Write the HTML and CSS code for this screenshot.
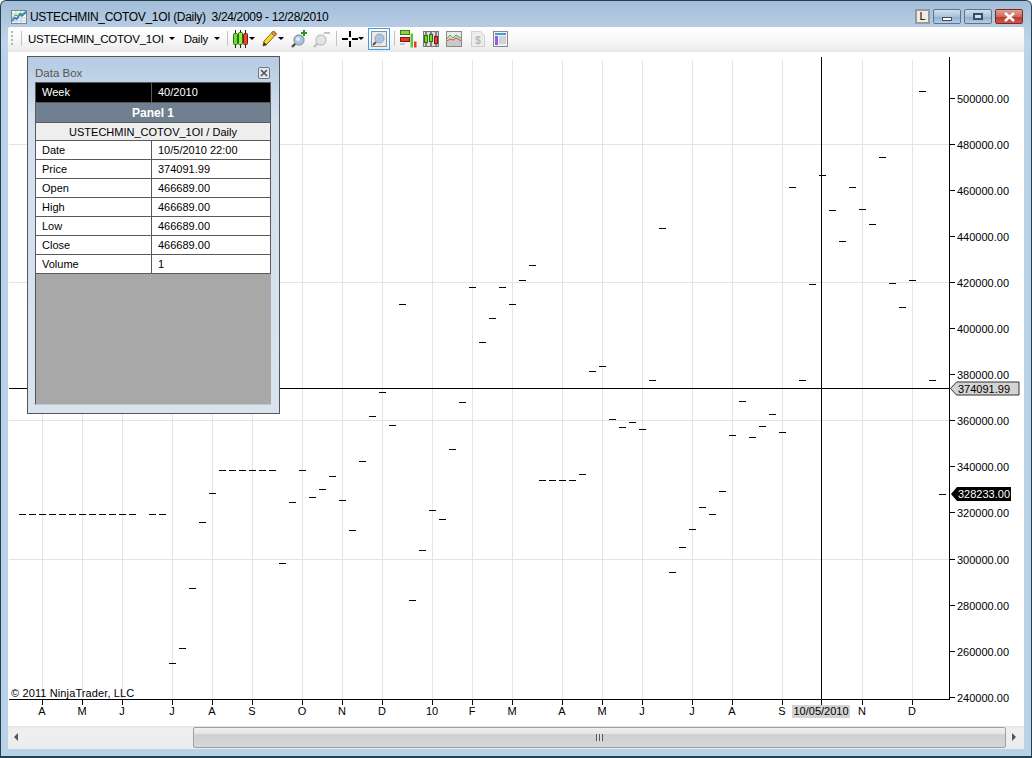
FILE: index.html
```html
<!DOCTYPE html>
<html lang="en">
<head>
  <meta charset="UTF-8">
  <title>USTECHMIN_COTOV_1OI (Daily)</title>
  <link rel="stylesheet" href="styles.css">
</head>
<body>

<div class="window">

  <!-- title bar -->
  <div class="titlebar">
    <svg class="app-icon" width="16" height="16" viewBox="0 0 16 16">
      <rect x="0.5" y="1.5" width="15" height="13" fill="#f4f6fa" stroke="#7b8794"/>
      <path d="M1 5h14M1 9h14M1 12h14M5 2v12M10 2v12" stroke="#c5ccd6"/>
      <path d="M1 12l3-3 2 1 3-5 2 2 4-4" fill="none" stroke="#2a70c8" stroke-width="1.5"/>
      <path d="M1 10l3-4 3 1 2-3 2 1 4-3" fill="none" stroke="#45b04a"/>
    </svg>
    <span class="title-text">USTECHMIN_COTOV_1OI (Daily)&nbsp; 3/24/2009 - 12/28/2010</span>
    <div class="caption-btns">
      <span class="link-btn">L</span>
      <span class="cap-btn"><i class="min-glyph"></i></span>
      <span class="cap-btn"><i class="max-glyph"></i></span>
      <span class="cap-btn cap-close">
        <svg width="13" height="10" viewBox="0 0 13 10"><path d="M2 1l9 8M11 1l-9 8" stroke="#fff" stroke-width="2.4"/></svg>
      </span>
    </div>
  </div>

  <!-- toolbar -->
  <div class="toolbar">
    <span class="grip"></span>
    <span class="sep"></span>
    <span class="tool-label">USTECHMIN_COTOV_1OI</span><span class="arrow arrow-a"></span>
    <span class="tool-label label-daily">Daily</span><span class="arrow arrow-daily"></span>
    <span class="sep sep-b"></span>

    <svg class="tool-icon gap-5" width="15" height="18" viewBox="0 0 15 18">
      <path d="M2.5 0v18M7.5 0v18M12.5 0v18" stroke="#222"/>
      <rect x="0.5" y="3.5" width="4" height="11" rx="1" fill="#6fe02a" stroke="#2d6a12"/>
      <rect x="5.5" y="2.5" width="4" height="12" rx="1" fill="#8cec3c" stroke="#2d6a12"/>
      <rect x="10.5" y="3.5" width="4" height="11" rx="1" fill="#ee4433" stroke="#7a1a12"/>
    </svg><span class="arrow arrow-i"></span>

    <svg class="tool-icon gap-7" width="15" height="17" viewBox="0 0 15 17">
      <path d="M11.5 1l3 3L5 14l-4 2 1-5z" fill="#f6d23c" stroke="#8a6d10"/>
      <path d="M11.5 1l3 3-2 2-3-3z" fill="#e8857a" stroke="#8a6d10"/>
      <path d="M1 16l1-4 3 3z" fill="#333"/>
    </svg><span class="arrow arrow-i"></span>

    <svg class="tool-icon gap-7" width="16" height="18" viewBox="0 0 16 18">
      <path d="M1 17l5-5" stroke="#444" stroke-width="2.2"/>
      <circle cx="8" cy="10" r="5" fill="#a5c6e8" stroke="#9a9fa6" stroke-width="1.4"/>
      <circle cx="7" cy="9" r="2" fill="#e6eef8"/>
      <path d="M13 0v6M10 3h6" stroke="#1a9a2a" stroke-width="2"/>
    </svg>
    <svg class="tool-icon gap-6" width="17" height="18" viewBox="0 0 17 18">
      <path d="M1 17l5-5" stroke="#bbb" stroke-width="2.2"/>
      <circle cx="8" cy="10" r="5" fill="#e4e4e4" stroke="#c6c6c6" stroke-width="1.4"/>
      <path d="M11 3h6" stroke="#c2c2c2" stroke-width="2"/>
    </svg>
    <span class="sep sep-c"></span>

    <svg class="tool-icon gap-5" width="16" height="16" viewBox="0 0 16 16">
      <path d="M0 8h6M10 8h6M8 0v6M8 10v6" stroke="#000" stroke-width="2"/>
    </svg><span class="arrow"></span>

    <span class="tool-selected">
      <svg width="16" height="16" viewBox="0 0 16 16">
        <rect x="0.5" y="0.5" width="15" height="15" fill="#e9e9e9" stroke="#8f8f8f"/>
        <path d="M2 14l3-3" stroke="#555" stroke-width="2"/>
        <circle cx="8.5" cy="7.5" r="4.5" fill="#a9c6e6" stroke="#9aa3ad"/>
      </svg>
    </span>
    <span class="sep sep-d"></span>

    <svg class="tool-icon gap-5" width="17" height="18" viewBox="0 0 17 18">
      <path d="M0 3h8M0 9h3M0 14h5" stroke="#999"/>
      <rect x="0.5" y="0.5" width="9" height="4" fill="#7ddc3a" stroke="#3c7a1a"/>
      <rect x="0.5" y="7.5" width="9" height="4" fill="#e8392c" stroke="#7a1a12"/>
      <rect x="10.5" y="3.5" width="2.5" height="14" fill="#58c832"/>
      <rect x="14" y="11.5" width="2.5" height="6" fill="#e8392c"/>
    </svg>
    <svg class="tool-icon gap-6" width="16" height="16" viewBox="0 0 16 16">
      <rect x="0.5" y="0.5" width="15" height="15" fill="#ddd" stroke="#777"/>
      <path d="M3 1v14M8 1v14M13 1v14" stroke="#222"/>
      <rect x="1.5" y="4.5" width="3" height="7" fill="#6fe02a" stroke="#2d6a12"/>
      <rect x="6.5" y="3.5" width="3" height="7" fill="#6fe02a" stroke="#2d6a12"/>
      <rect x="11.5" y="5.5" width="3" height="7" fill="#ee4433" stroke="#7a1a12"/>
    </svg>
    <svg class="tool-icon gap-7" width="16" height="16" viewBox="0 0 16 16">
      <rect x="0.5" y="0.5" width="15" height="15" fill="#e9e9e9" stroke="#8a8a8a"/>
      <path d="M1 11l3-5 3 2 3-4 5 4v7H1z" fill="#c9c9c9"/>
      <path d="M1 8l3-4 3 3 3-3 5 3" fill="none" stroke="#3fb04a"/>
      <path d="M1 10l3-2 3 1 3-2 5 3" fill="none" stroke="#e0554a"/>
    </svg>
    <svg class="tool-icon gap-9" width="14" height="16" viewBox="0 0 14 16">
      <path d="M0.5 0.5h9l4 4v11h-13z" fill="#ececec" stroke="#cfcfcf"/>
      <text class="doc-dollar" x="7" y="13">$</text>
    </svg>
    <svg class="tool-icon gap-8" width="15" height="16" viewBox="0 0 15 16">
      <rect x="0.5" y="0.5" width="14" height="15" fill="#f2f2f2" stroke="#888"/>
      <rect x="2" y="2" width="11" height="2" fill="#3e9cd6"/>
      <rect x="2" y="5" width="3" height="9" fill="#9a5ce0"/>
      <path d="M6 6h7M6 8h7M6 10h7M6 12h7" stroke="#a9b4c4"/>
    </svg>
  </div>

  <!-- chart -->
  <div class="chart">
    <svg class="plot" width="1016" height="675" viewBox="8 52 1016 675">
      <path class="grid" d="M42.5 60V699M82.5 60V699M122.5 60V699M172.5 60V699M212.5 60V699M252.5 60V699M302.5 60V699M342.5 60V699M382.5 60V699M432.5 60V699M472.5 60V699M512.5 60V699M562.5 60V699M602.5 60V699M642.5 60V699M692.5 60V699M732.5 60V699M782.5 60V699M862.5 60V699M912.5 60V699"/>
      <path class="grid" d="M9 144.5H949M9 282.5H949M9 420.5H949M9 559.5H949"/>

      <!-- one dash per bar -->
      <path class="bars" d="M19 514.5h7M29 514.5h7M39 514.5h7M49 514.5h7M59 514.5h7M69 514.5h7M79 514.5h7M89 514.5h7M99 514.5h7M109 514.5h7M119 514.5h7M129 514.5h7M149 514.5h7M159 514.5h7
        M169 663.5h7M179 648.5h7M189 588.5h7M199 522.5h7M209 493.5h7M219 470.5h7M229 470.5h7M239 470.5h7M249 470.5h7M259 470.5h7M269 470.5h7M279 563.5h7
        M289 502.5h7M299 470.5h7M309 497.5h7M319 489.5h7M329 476.5h7M339 500.5h7M349 530.5h7M359 461.5h7M369 416.5h7M379 392.5h7M389 425.5h7M399 304.5h7M409 600.5h7M419 550.5h7M429 510.5h7M439 519.5h7M449 449.5h7M459 402.5h7
        M469 287.5h7M479 342.5h7M489 318.5h7M499 287.5h7M509 304.5h7M519 280.5h7M529 265.5h7M539 480.5h7M549 480.5h7M559 480.5h7M569 480.5h7M579 474.5h7M589 371.5h7M599 366.5h7M609 419.5h7M619 427.5h7M629 422.5h7M639 429.5h7
        M649 380.5h7M659 228.5h7M669 572.5h7M679 547.5h7M689 529.5h7M699 507.5h7M709 514.5h7M719 491.5h7M729 435.5h7M739 401.5h7M749 437.5h7M759 426.5h7M769 414.5h7M779 432.5h7M789 187.5h7M799 380.5h7M809 284.5h7M819 175.5h7
        M829 210.5h7M839 241.5h7M849 187.5h7M859 209.5h7M869 224.5h7M879 157.5h7M889 283.5h7M899 307.5h7M909 280.5h7M919 91.5h7M929 380.5h7M939 494.5h7"/>

      <!-- crosshair and axes -->
      <path class="axis" d="M821.5 57V705M9 388.5H949"/>
      <path class="axis" d="M949.5 57V700M9 699.5H950"/>
      <path class="axis" d="M950 98.5h5M950 144.5h5M950 190.5h5M950 236.5h5M950 282.5h5M950 328.5h5M950 374.5h5M950 420.5h5M950 466.5h5M950 512.5h5M950 559.5h5M950 605.5h5M950 651.5h5M950 697.5h5"/>
      <path class="axis" d="M42.5 700v5M82.5 700v5M122.5 700v5M172.5 700v5M212.5 700v5M252.5 700v5M302.5 700v5M342.5 700v5M382.5 700v5M432.5 700v5M472.5 700v5M512.5 700v5M562.5 700v5M602.5 700v5M642.5 700v5M692.5 700v5M732.5 700v5M782.5 700v5M862.5 700v5M912.5 700v5"/>

      <text class="copyright" x="11" y="697">© 2011 NinjaTrader, LLC</text>

      <g class="price-labels">
        <text x="957" y="103">500000.00</text>
        <text x="957" y="149">480000.00</text>
        <text x="957" y="195">460000.00</text>
        <text x="957" y="241">440000.00</text>
        <text x="957" y="287">420000.00</text>
        <text x="957" y="333">400000.00</text>
        <text x="957" y="379">380000.00</text>
        <text x="957" y="425">360000.00</text>
        <text x="957" y="471">340000.00</text>
        <text x="957" y="517">320000.00</text>
        <text x="957" y="564">300000.00</text>
        <text x="957" y="610">280000.00</text>
        <text x="957" y="656">260000.00</text>
        <text x="957" y="702">240000.00</text>
      </g>

      <path class="tag-cross" d="M950.5 388.5l6-6.5h62.5v13h-62.5z"/>
      <text class="tag-text" x="958" y="393">374091.99</text>
      <path class="tag-last" d="M951 494l6-7h54v14h-54z"/>
      <text class="tag-text tag-text-light" x="958" y="498">328233.00</text>

      <g class="date-labels">
        <text x="42" y="715">A</text>
        <text x="82" y="715">M</text>
        <text x="122" y="715">J</text>
        <text x="172" y="715">J</text>
        <text x="212" y="715">A</text>
        <text x="252" y="715">S</text>
        <text x="302" y="715">O</text>
        <text x="342" y="715">N</text>
        <text x="382" y="715">D</text>
        <text x="432" y="715">10</text>
        <text x="472" y="715">F</text>
        <text x="512" y="715">M</text>
        <text x="562" y="715">A</text>
        <text x="602" y="715">M</text>
        <text x="642" y="715">J</text>
        <text x="692" y="715">J</text>
        <text x="732" y="715">A</text>
        <text x="782" y="715">S</text>
        <text x="862" y="715">N</text>
        <text x="912" y="715">D</text>
      </g>
      <rect class="date-tag" x="792" y="705" width="58" height="13"/>
      <text class="date-tag-text" x="821" y="715">10/05/2010</text>
    </svg>

    <!-- floating data box -->
    <div class="databox">
      <div class="databox-head">
        <span>Data Box</span>
        <span class="databox-close">
          <svg width="8" height="8" viewBox="0 0 8 8"><path d="M1 1l6 6M7 1l-6 6" stroke="#555" stroke-width="1.7"/></svg>
        </span>
      </div>
      <div class="databox-body">
        <table class="datagrid">
          <tr class="row-week"><td class="col-name">Week</td><td>40/2010</td></tr>
          <tr class="row-panel"><td colspan="2">Panel 1</td></tr>
          <tr class="row-series"><td colspan="2">USTECHMIN_COTOV_1OI / Daily</td></tr>
          <tr><td class="col-name">Date</td><td>10/5/2010 22:00</td></tr>
          <tr><td class="col-name">Price</td><td>374091.99</td></tr>
          <tr><td class="col-name">Open</td><td>466689.00</td></tr>
          <tr><td class="col-name">High</td><td>466689.00</td></tr>
          <tr><td class="col-name">Low</td><td>466689.00</td></tr>
          <tr><td class="col-name">Close</td><td>466689.00</td></tr>
          <tr><td class="col-name">Volume</td><td>1</td></tr>
        </table>
      </div>
    </div>
  </div>

  <!-- scrollbar -->
  <div class="scrollbar">
    <span class="scroll-arrow arrow-left"></span>
    <div class="scroll-thumb"><span class="thumb-grip"></span></div>
    <span class="scroll-arrow arrow-right"></span>
  </div>

</div>

</body>
</html>
```

FILE: styles.css
```css
html, body {
  margin: 0;
  padding: 0;
  background: #fff;
}

body {
  font-family: "Liberation Sans", Arial, sans-serif;
  font-size: 11px;
  color: #000;
}

.window {
  width: 1032px;
  height: 758px;
  box-sizing: border-box;
  padding: 0 7px 7px;
  display: flex;
  flex-direction: column;
  border: 1px solid #24414f;
  border-bottom-width: 2px;
  border-radius: 6px 6px 0 0;
  background: linear-gradient(to bottom, #a3bdd9 0, #c0d4e9 40px, #b9d2ea 60px);
}

/* --- title bar --- */
.titlebar {
  height: 26px;
  flex: none;
  display: flex;
  align-items: center;
  padding-top: 5px;
  box-sizing: border-box;
}

.app-icon {
  margin: 0 3px 0 3px;
}

.title-text {
  font-size: 12px;
  letter-spacing: -0.33px;
  white-space: pre;
}

.caption-btns {
  margin-left: auto;
  margin-right: 1px;
  display: flex;
  align-items: center;
  gap: 3px;
}

.link-btn {
  width: 11px;
  height: 11px;
  border: 2px solid #999;
  background: #f1ece0;
  font-size: 11px;
  line-height: 11px;
  text-align: center;
}

.cap-btn {
  width: 26px;
  height: 13px;
  border: 1px solid #5b7590;
  border-radius: 2px;
  background: linear-gradient(to bottom, #cfe0f0 0, #a9c3dd 50%, #8eadcc 51%, #b7cde3 100%);
  display: flex;
  align-items: center;
  justify-content: center;
}

.cap-close {
  border-color: #7a2a22;
  background: linear-gradient(to bottom, #e0a097 0, #cf6a5c 50%, #b8382a 51%, #cf5a4a 100%);
}

.min-glyph {
  display: block;
  width: 8px;
  height: 2px;
  border: 1px solid #3c4c5c;
  background: #fff;
  margin-top: 5px;
}

.max-glyph {
  display: block;
  width: 6px;
  height: 3px;
  border: 2px solid #3c4c5c;
  background: #cfe0f0;
}

/* --- toolbar --- */
.toolbar {
  height: 25px;
  flex: none;
  box-sizing: border-box;
  padding-bottom: 2px;
  display: flex;
  align-items: center;
  background: linear-gradient(to bottom, #fff 0, #f8f8f8 50%, #e9e9e9 100%);
  border-radius: 2px 2px 0 0;
}

.grip {
  width: 2px;
  height: 15px;
  margin-left: 3px;
  background: repeating-linear-gradient(to bottom, #b5b5b5 0, #b5b5b5 2px, transparent 2px, transparent 4px);
}

.sep {
  width: 1px;
  height: 15px;
  background: #c2c2c2;
  margin-left: 8px;
}

.tool-label {
  margin-left: 6px;
  font-size: 11.5px;
  letter-spacing: -0.25px;
}

.label-daily {
  margin-left: 9px;
}

.arrow {
  width: 0;
  height: 0;
  flex: none;
  border-style: solid;
  border-width: 3px 3px 0;
  border-color: #000 transparent transparent;
}

.arrow-a {
  margin-left: 5px;
}

.arrow-daily {
  margin-left: 6px;
}

.arrow-i {
  margin-left: 1px;
}

.sep-b {
  margin-left: 7px;
}

.sep-c {
  margin-left: 6px;
}

.sep-d {
  margin-left: 4px;
}

.tool-icon {
  flex: none;
}

.gap-5 {
  margin-left: 5px;
}

.gap-6 {
  margin-left: 6px;
}

.gap-7 {
  margin-left: 7px;
}

.gap-8 {
  margin-left: 8px;
}

.gap-9 {
  margin-left: 9px;
}

.doc-dollar {
  font-size: 10px;
  font-weight: bold;
  fill: #b5b5b5;
  text-anchor: middle;
}

.tool-selected {
  width: 20px;
  height: 20px;
  margin-left: 4px;
  border: 1px solid #3f9bef;
  display: flex;
  align-items: center;
  justify-content: center;
  flex: none;
}

/* --- chart --- */
.chart {
  flex: 1;
  position: relative;
  background: #fff;
  min-height: 0;
}

.plot {
  display: block;
}

.plot text {
  font-family: "Liberation Sans", Arial, sans-serif;
  font-size: 11px;
  fill: #000;
}

.plot .copyright {
  letter-spacing: 0.12px;
}

.grid {
  stroke: #e4e4e4;
  fill: none;
}

.bars,
.axis {
  stroke: #000;
  fill: none;
}

.date-labels text,
.date-tag-text {
  text-anchor: middle;
}

.tag-cross {
  fill: #d3d3d3;
  stroke: #333;
}

.tag-last {
  fill: #000;
}

.plot .tag-text-light {
  fill: #fff;
}

.date-tag {
  fill: #d3d3d3;
}

/* --- data box --- */
.databox {
  position: absolute;
  left: 19px;
  top: 4px;
  width: 253px;
  height: 358px;
  box-sizing: border-box;
  border: 1px solid #555;
  padding: 0 8px 8px 7px;
  display: flex;
  flex-direction: column;
  background: linear-gradient(to bottom, #b5cbe2 0, #d3e0ee 60px, #d8e3f0 100%);
}

.databox-head {
  height: 25px;
  flex: none;
  display: flex;
  align-items: center;
  justify-content: space-between;
  font-size: 11.5px;
  color: #555;
  padding: 7px 1px 0 0;
  box-sizing: border-box;
}

.databox-close {
  width: 10px;
  height: 10px;
  border: 1px solid #6b7787;
  border-radius: 2px;
  background: #e3e9f1;
  display: flex;
  align-items: center;
  justify-content: center;
}

.databox-body {
  flex: 1;
  background: #a8a8a8;
  border-left: 1px solid #555;
  border-bottom: 1px solid #c8c8c8;
}

.datagrid {
  width: 236px;
  border-collapse: collapse;
  table-layout: fixed;
  margin-left: -1px;
}

.datagrid td {
  height: 19px;
  box-sizing: border-box;
  padding: 0 0 0 6px;
  border: 1px solid #5a5a5a;
  background: #fff;
  line-height: 16px;
  white-space: nowrap;
}

.datagrid .col-name {
  width: 116px;
}

.datagrid .row-week td {
  height: 20px;
  padding-bottom: 1px;
  background: #000;
  color: #fff;
}

.datagrid .row-panel td {
  height: 20px;
  background: #708090;
  color: #fff;
  font-weight: bold;
  font-size: 12px;
  text-align: center;
  padding: 0;
}

.datagrid .row-series td {
  height: 18px;
  background: #eee;
  text-align: center;
  padding: 0;
}

/* --- scrollbar --- */
.scrollbar {
  height: 23px;
  flex: none;
  display: flex;
  align-items: center;
  background: linear-gradient(to bottom, #e4e4e4 0, #efefef 3px, #ececec 100%);
  box-sizing: border-box;
  padding-bottom: 1px;
}

.scroll-arrow {
  width: 0;
  height: 0;
  border-style: solid;
  border-color: transparent;
}

.arrow-left {
  margin-left: 6px;
  border-width: 4px 4px 4px 0;
  border-right-color: #555;
}

.arrow-right {
  margin-left: 6px;
  border-width: 4px 0 4px 4px;
  border-left-color: #555;
}

.scroll-thumb {
  width: 813px;
  height: 21px;
  margin-left: 175px;
  box-sizing: border-box;
  border: 1px solid #a0a0a0;
  border-radius: 2px;
  background: linear-gradient(to bottom, #f0f0f0 0, #e4e4e4 30%, #cfcfcf 35%, #d6d6d6 100%);
  display: flex;
  align-items: center;
  justify-content: center;
}

.thumb-grip {
  width: 7px;
  height: 7px;
  background: repeating-linear-gradient(to right, #555 0, #555 1px, #ddd 1px, #ddd 3px);
}
```
